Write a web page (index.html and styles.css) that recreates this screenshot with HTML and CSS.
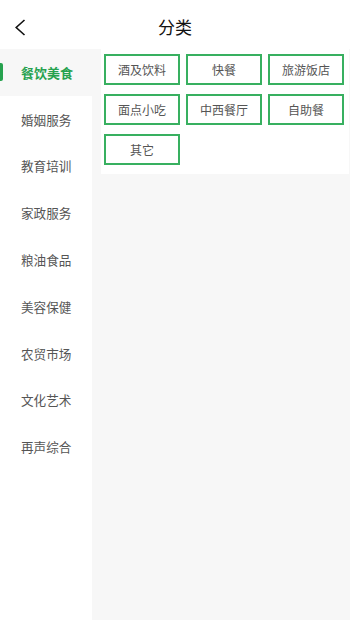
FILE: index.html
```html
<!DOCTYPE html>
<html lang="zh">
<head>
<meta charset="utf-8">
<link rel="stylesheet" href="styles.css">
</head>
<body>
<div class="page">
  <div class="header">
    <div class="back">
      <svg class="back-icon" width="12" height="17" viewBox="0 0 12 17"><path d="M10.5 1 L2.2 8.5 L10.5 16" fill="none" stroke="#111" stroke-width="1.6"/></svg>
    </div>
    <div class="title">分类</div>
    <div class="spacer"></div>
  </div>
  <div class="main">
    <div class="sidebar">
      <div class="item active"><span class="bar"></span>餐饮美食</div>
      <div class="item">婚姻服务</div>
      <div class="item">教育培训</div>
      <div class="item">家政服务</div>
      <div class="item">粮油食品</div>
      <div class="item">美容保健</div>
      <div class="item">农贸市场</div>
      <div class="item">文化艺术</div>
      <div class="item">再声综合</div>
    </div>
    <div class="panel">
      <div class="tag">酒及饮料</div>
      <div class="tag">快餐</div>
      <div class="tag">旅游饭店</div>
      <div class="tag">面点小吃</div>
      <div class="tag">中西餐厅</div>
      <div class="tag">自助餐</div>
      <div class="tag">其它</div>
    </div>
  </div>
</div>
</body>
</html>
```
FILE: styles.css
```css
html, body {
  margin: 0;
  padding: 0;
  background: #fff;
}
body {
  font-family: "Noto Sans CJK SC", "Noto Sans", sans-serif;
}
.page {
  width: 350px;
  height: 622px;
  display: flex;
  flex-direction: column;
}
.header {
  height: 49px;
  display: flex;
  align-items: center;
  background: #fff;
}
.back {
  width: 50px;
  padding-left: 14px;
  box-sizing: border-box;
  display: flex;
  align-items: center;
  height: 100%;
}
.back-icon {
  display: block;
  margin-top: 6px;
}
.title {
  flex: 1;
  text-align: center;
  font-size: 17px;
  color: #111;
  line-height: 1;
  margin-top: 3px;
}
.spacer {
  width: 50px;
}
.main {
  flex: 1;
  display: flex;
  background: #f7f7f7;
  margin-bottom: 2px;
  align-items: flex-start;
}
.sidebar {
  width: 92px;
  align-self: stretch;
  background: #fff;
  flex-shrink: 0;
}
.item {
  position: relative;
  height: 46.8px;
  display: flex;
  align-items: center;
  padding-left: 21px;
  font-size: 12.6px;
  color: #555;
}
.item.active {
  background: #f7f7f7;
  color: #26a24f;
  font-weight: bold;
  font-size: 13px;
}
.bar {
  position: absolute;
  left: 0;
  top: 14px;
  width: 3px;
  height: 18px;
  background: #26a24f;
  border-radius: 0 2px 2px 0;
}
.panel {
  margin-left: 9px;
  margin-right: 1px;
  flex: 1;
  background: #fff;
  padding: 5px 5px 9px 3px;
  display: grid;
  grid-template-columns: repeat(3, 1fr);
  column-gap: 6px;
  row-gap: 9px;
}
.tag {
  height: 31px;
  box-sizing: border-box;
  border: 2px solid #38b060;
  display: flex;
  align-items: center;
  justify-content: center;
  font-size: 12px;
  color: #555;
}
```
